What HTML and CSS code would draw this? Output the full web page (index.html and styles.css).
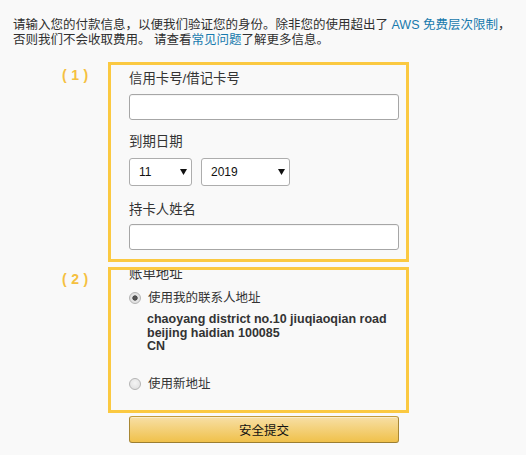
FILE: index.html
```
<!DOCTYPE html>
<html lang="zh-CN">
<head>
<meta charset="utf-8">
<title>付款信息</title>
<link rel="stylesheet" href="styles.css">
</head>
<body>
<p class="intro">请输入您的付款信息，以便我们验证您的身份。除非您的使用超出了 <a class="link" href="#">AWS 免费层次限制</a>，<br>否则我们不会收取费用。 请查看<a class="link" href="#">常见问题</a>了解更多信息。</p>
<form class="form">
  <div class="step">( 1 )</div>
  <div class="box box-card">
    <label class="label">信用卡号/借记卡号</label>
    <input class="field" type="text">
    <label class="label label-gap">到期日期</label>
    <div class="selects">
      <div class="select select-month"><span>11</span><svg class="arrow" width="7" height="7" viewBox="0 0 7 7"><polygon points="0,1 7,1 3.5,7" fill="#111"/></svg></div>
      <div class="select select-year"><span>2019</span><svg class="arrow" width="7" height="7" viewBox="0 0 7 7"><polygon points="0,1 7,1 3.5,7" fill="#111"/></svg></div>
    </div>
    <label class="label label-gap2">持卡人姓名</label>
    <input class="field field-name" type="text">
  </div>
  <div class="step step-2">( 2 )</div>
  <div class="box box-address">
    <div class="label label-bill">账单地址</div>
    <label class="radio-row"><input class="radio" type="radio" name="addr" checked><span>使用我的联系人地址</span></label>
    <div class="address">chaoyang district no.10 jiuqiaoqian road<br>beijing haidian 100085<br>CN</div>
    <label class="radio-row radio-new"><input class="radio" type="radio" name="addr"><span>使用新地址</span></label>
  </div>
  <div></div>
  <button class="submit" type="button">安全提交</button>
</form>
</body>
</html>
```
FILE: styles.css
```
html, body {
  margin: 0;
  padding: 0;
}
body {
  background: #f9f9f9;
  color: #333;
  font-family: "Liberation Sans", "Noto Sans CJK SC", sans-serif;
  font-size: 12.5px;
  width: 526px;
  height: 455px;
  overflow: hidden;
}
.intro {
  margin: 0;
  padding: 18px 0 0 13px;
  line-height: 15px;
  color: #2f2f2f;
}
.link {
  color: #1779ad;
  text-decoration: none;
}
.form {
  display: grid;
  grid-template-columns: 108px 301px;
  margin-top: 14px;
}
.step {
  padding: 5px 0 0 62px;
  color: #f5c040;
  font-weight: bold;
  font-size: 14px;
  line-height: 16px;
  letter-spacing: 0.3px;
}
.step-2 {
  margin-top: 5px;
  padding-top: 4px;
}
.box {
  box-sizing: border-box;
  border: 3px solid #fbc941;
  padding: 0 0 0 18px;
  overflow: hidden;
}
.box-card {
  padding-top: 5px;
  padding-bottom: 9px;
}
.box-address {
  margin-top: 5px;
  padding-bottom: 18px;
}
.label {
  display: block;
  font-size: 13.4px;
  line-height: 18px;
  color: #333;
}
.label-gap {
  margin-top: 13px;
}
.label-gap2 {
  margin-top: 15px;
}
.field {
  display: block;
  box-sizing: border-box;
  width: 270px;
  height: 26px;
  margin: 6px 0 0 0;
  border: 1px solid #a6a6a6;
  border-radius: 3px;
  background: #fff;
  box-shadow: inset 0 1px 0 rgba(0,0,0,0.04);
}
.field-name {
  margin-top: 5px;
}
.selects {
  display: flex;
  gap: 9px;
  margin-top: 7px;
}
.select {
  box-sizing: border-box;
  height: 28px;
  display: flex;
  align-items: center;
  justify-content: space-between;
  border: 1px solid #adadad;
  border-radius: 3px;
  background: #fff;
  font-size: 12px;
  color: #111;
  padding: 0 4px 0 9px;
}
.select-month {
  width: 63px;
}
.select-year {
  width: 89px;
}
.arrow {
  display: block;
  margin-top: -1px;
}
.label-bill {
  margin-top: -5px;
}
.radio-row {
  display: flex;
  align-items: center;
  gap: 7px;
  height: 16px;
  line-height: 16px;
  margin-top: 7px;
  color: #333;
}
.radio {
  appearance: none;
  -webkit-appearance: none;
  box-sizing: border-box;
  width: 12px;
  height: 12px;
  margin: 0;
  border: 1px solid #b4b4b4;
  border-radius: 50%;
  background: radial-gradient(circle at 50% 40%, #f4f4f4 0, #dcdcdc 100%);
}
.radio:checked {
  background: radial-gradient(circle, #5a5a5a 0, #4a4a4a 2.3px, #e6e6e6 3px, #dadada 100%);
}
.address {
  margin: 7px 0 0 18px;
  font-weight: bold;
  line-height: 13.5px;
  color: #333;
}
.radio-new {
  margin-top: 22px;
}
.submit {
  box-sizing: border-box;
  width: 270px;
  height: 27px;
  margin: 3px 0 0 21px;
  padding: 0;
  border: 1px solid #a88734;
  border-color: #c29c3d #a88734 #9c7e31;
  border-radius: 3px;
  background: linear-gradient(to bottom, #f7dfa5, #f0c14b);
  font-family: "Liberation Sans", "Noto Sans CJK SC", sans-serif;
  font-size: 12.5px;
  color: #111;
  box-shadow: inset 0 1px 0 rgba(255,255,255,0.4);
}
```
